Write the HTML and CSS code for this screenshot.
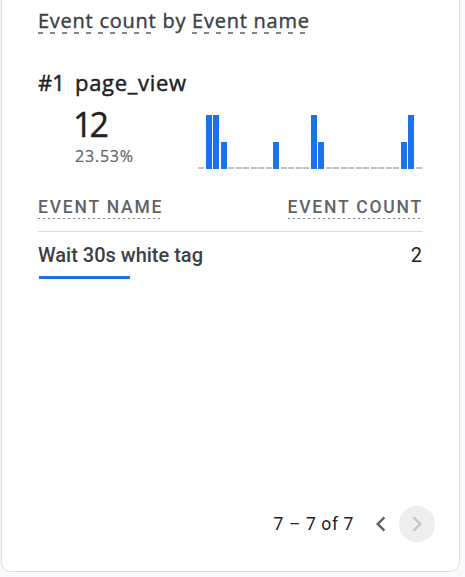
FILE: index.html
```html
<!DOCTYPE html>
<html lang="en">
<head>
<meta charset="utf-8">
<title>Event count by Event name</title>
<link rel="stylesheet" href="styles.css">
</head>
<body>
<div class="card">
  <div class="title"><span class="dash">Event count</span> by <span class="dash">Event name</span></div>

  <div class="rank">
    <span class="rank-num">#1</span>
    <span class="rank-name">page_view</span>
  </div>

  <div class="stats">
    <div class="numbers">
      <div class="big">12</div>
      <div class="pct">23.53%</div>
    </div>
    <div class="chart">
      <div class="bar b0"></div><div class="bar b2"></div><div class="bar b2"></div><div class="bar b1"></div><div class="bar b0"></div>
      <div class="bar b0"></div><div class="bar b0"></div><div class="bar b0"></div><div class="bar b0"></div><div class="bar b0"></div>
      <div class="bar b1"></div><div class="bar b0"></div><div class="bar b0"></div><div class="bar b0"></div><div class="bar b0"></div>
      <div class="bar b2"></div><div class="bar b1"></div><div class="bar b0"></div><div class="bar b0"></div><div class="bar b0"></div>
      <div class="bar b0"></div><div class="bar b0"></div><div class="bar b0"></div><div class="bar b0"></div><div class="bar b0"></div>
      <div class="bar b0"></div><div class="bar b0"></div><div class="bar b1"></div><div class="bar b2"></div><div class="bar b0"></div>
    </div>
  </div>

  <div class="thead">
    <span class="th">Event name</span>
    <span class="th">Event count</span>
  </div>

  <div class="trow">
    <div class="trow-line">
      <span class="cell-name">Wait 30s white tag</span>
      <span class="cell-count">2</span>
    </div>
    <div class="meter" style="width: 91px"></div>
  </div>

  <div class="footer">
    <span class="range">7 – 7 of 7</span>
    <button class="nav prev" aria-label="Previous page">
      <svg viewBox="0 0 24 24" width="30" height="30"><path d="M15.41 7.41L14 6l-6 6 6 6 1.41-1.41L10.83 12z"/></svg>
    </button>
    <button class="nav next" aria-label="Next page" disabled>
      <svg viewBox="0 0 24 24" width="30" height="30"><path d="M8.59 16.59L10 18l6-6-6-6-1.41 1.41L13.17 12z"/></svg>
    </button>
  </div>
</div>
</body>
</html>
```

FILE: styles.css
```css
* { box-sizing: border-box; }

html, body {
  margin: 0;
  padding: 0;
  background: #f8f9fa;
}

body {
  font-family: Roboto, "Liberation Sans", sans-serif;
  color: #202124;
  overflow: hidden;
}

.card {
  margin: -12px 5px 0 1px;
  height: 584px;
  background: #ffffff;
  border: 1px solid #dadce0;
  border-radius: 10px;
  padding: 20px 36px 29px 36px;
  display: flex;
  flex-direction: column;
}

.title {
  font-family: "Open Sans", sans-serif;
  font-size: 20px;
  line-height: 24px;
  color: #3c4043;
  letter-spacing: 0.75px;
  white-space: nowrap;
  -webkit-text-stroke: 0.4px #3c4043;
}

.dash {
  background-image: linear-gradient(to right, #80868b 5px, transparent 5px);
  background-size: 12px 2px;
  background-repeat: repeat-x;
  background-position: 0 100%;
}

.rank {
  margin-top: 34.5px;
  display: flex;
  font-family: "Open Sans", sans-serif;
  font-size: 22px;
  line-height: 28px;
  color: #202124;
  -webkit-text-stroke: 0.45px #202124;
}

.rank-num {
  width: 37px;
  flex: none;
}

.rank-name {
  letter-spacing: 0.7px;
}

.stats {
  margin-top: 8.5px;
  padding-left: 37px;
  display: flex;
  justify-content: space-between;
  align-items: flex-start;
}

.big {
  font-family: "Open Sans", sans-serif;
  font-size: 34px;
  line-height: 40px;
  color: #202124;
  letter-spacing: -3px;
  margin-left: -2px;
  -webkit-text-stroke: 0.4px #202124;
}

.pct {
  margin-top: 1.5px;
  font-family: "Open Sans", sans-serif;
  font-size: 16px;
  line-height: 20px;
  color: #5f6368;
  letter-spacing: 0.8px;
  -webkit-text-stroke: 0.2px #5f6368;
}

.chart {
  margin-top: 11px;
  margin-right: 1px;
  width: 224px;
  height: 54px;
  display: flex;
  align-items: flex-end;
  gap: 1.5px;
}

.bar {
  width: 6px;
  flex: none;
}

.b0 { height: 2px; background: #bdc1c6; }
.b1 { height: 27px; background: #1a73e8; }
.b2 { height: 54px; background: #1a73e8; }

.thead {
  margin-top: 28px;
  padding-bottom: 12px;
  border-bottom: 1px solid #dadce0;
  display: flex;
  justify-content: space-between;
  align-items: flex-start;
}

.th {
  display: block;
  font-size: 17.5px;
  line-height: 20px;
  font-weight: 500;
  text-transform: uppercase;
  letter-spacing: 1.8px;
  color: #5f6368;
  padding-bottom: 2px;
  background-image: linear-gradient(to right, #80868b 2px, transparent 2px);
  background-size: 5px 1px;
  background-repeat: repeat-x;
  background-position: 0 100%;
}

.th + .th {
  margin-right: 0;
}

.trow {
  padding-top: 10.5px;
}

.trow-line {
  display: flex;
  justify-content: space-between;
  font-size: 20px;
  line-height: 24px;
  font-weight: 500;
  color: #3c4043;
}

.cell-count {
  font-weight: 400;
  color: #202124;
  margin-right: 1px;
}

.meter {
  margin-top: 9.5px;
  margin-left: 1px;
  height: 3px;
  background: #1a73e8;
}

.footer {
  margin-top: auto;
  margin-right: -12px;
  height: 36px;
  display: flex;
  justify-content: flex-end;
  align-items: center;
}

.range {
  font-size: 17.5px;
  color: #202124;
  margin-right: 9px;
  letter-spacing: 0.6px;
}

.nav {
  width: 36px;
  height: 36px;
  border: none;
  padding: 0;
  margin: 0;
  border-radius: 50%;
  background: transparent;
  display: flex;
  align-items: center;
  justify-content: center;
}

.prev svg { fill: #5f6368; }

.next {
  background: #eeeeee;
}

.next svg { fill: #c4c7c5; }
```
